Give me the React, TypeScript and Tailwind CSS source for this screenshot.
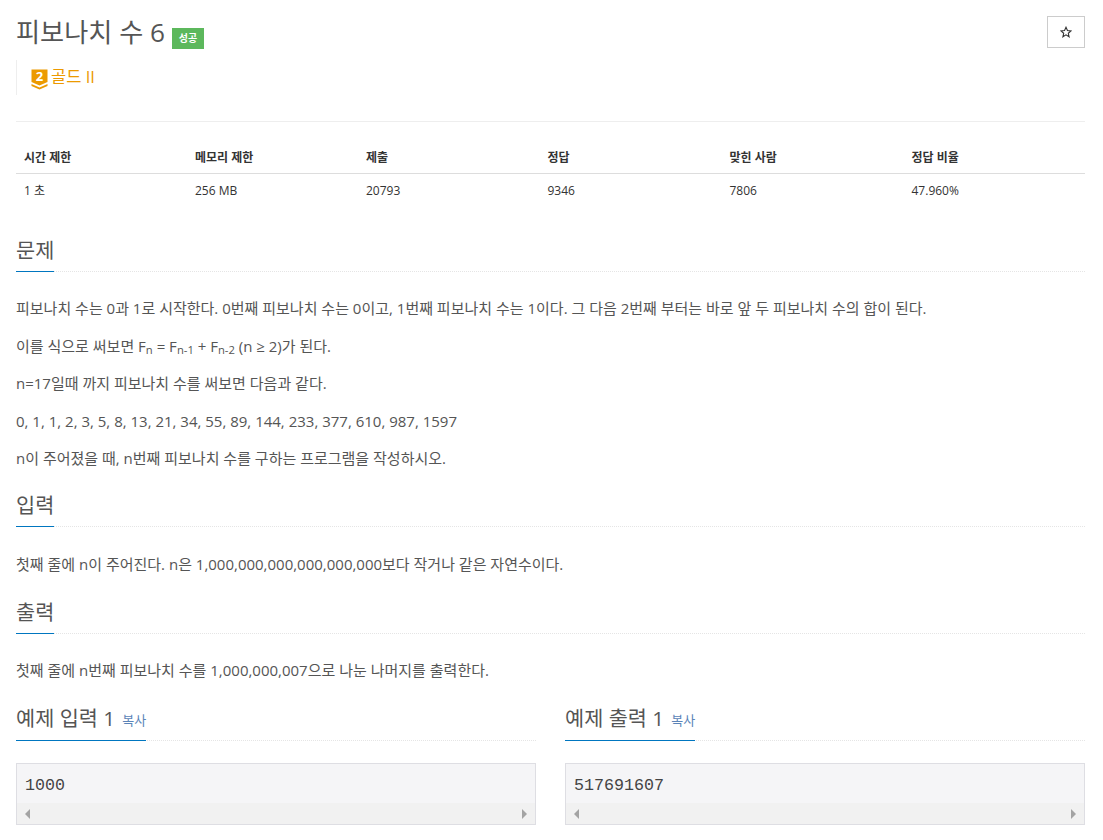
import React from "react";

const FONT = "font-['Open_Sans','Noto_Sans_CJK_KR',sans-serif]";

const stats = [
  { label: "시간 제한", value: "1 초", w: "w-[171px]" },
  { label: "메모리 제한", value: "256 MB", w: "w-[171px]" },
  { label: "제출", value: "20793", w: "w-[181.5px]" },
  { label: "정답", value: "9346", w: "w-[182px]" },
  { label: "맞힌 사람", value: "7806", w: "w-[182px]" },
  { label: "정답 비율", value: "47.960%", w: "flex-1" },
];

function Headline({ title }: { title: string }) {
  return (
    <div className="border-b border-dotted border-[#e5e5e5] h-[37px] flex">
      <div className="h-[37px] border-b border-[#0076c0] flex items-start">
        <h2 className="text-[20.8px] leading-[29px] pt-[1px] text-[#555]">{title}</h2>
      </div>
    </div>
  );
}

function SampleHead({ title }: { title: string }) {
  return (
    <div className="border-b border-dotted border-[#e5e5e5] h-[37px] flex">
      <div className="h-[37px] border-b border-[#0076c0] flex items-start">
        <h2 className="text-[20.8px] leading-[29px] text-[#555]">{title}</h2>
        <span className="ml-[7px] mt-[6px] text-[13px] leading-[20px] text-[#5b84b8]">복사</span>
      </div>
    </div>
  );
}

function SampleBox({ value }: { value: string }) {
  return (
    <div className="mt-[22px] border border-[#dedee3] bg-[#f5f5f7] h-[62px] flex flex-col">
      <div className="h-[39px] pl-[8px] pt-[10px] font-['Liberation_Mono',monospace] text-[16.67px] leading-[24px] text-[#444]">
        {value}
      </div>
      <div className="h-[21px] bg-[#f1f1f1] flex items-center justify-between px-[8px]">
        <span className="w-0 h-0 border-y-[5px] border-y-transparent border-r-[5px] border-r-[#a3a3a3]" />
        <span className="w-0 h-0 border-y-[5px] border-y-transparent border-l-[5px] border-l-[#a3a3a3]" />
      </div>
    </div>
  );
}

export default function App() {
  return (
    <div className={`${FONT} w-[1103px] h-[840px] overflow-hidden bg-white pl-[16px] pr-[18px] text-[15px] text-[#555]`}>
      {/* title */}
      <div className="flex justify-between pt-[16px] h-[122px] border-b border-[#eee]">
        <div>
          <div className="flex items-start">
            <h1 className="text-[26.2px] leading-[32px] text-[#555]">피보나치 수 6</h1>
            <span className="ml-[7px] mt-[12px] w-[32px] h-[21px] bg-[#5cb85c] text-white text-[10px] font-bold flex items-center justify-center">
              성공
            </span>
          </div>
          <div className="mt-[11px] h-[35px] border-l border-[#eee] pl-[14px] flex items-center">
            <svg width="17" height="23" viewBox="0 -2 17 23" className="mr-[3px] mt-[2px]">
              <path d="M0.5 0.5h16v12.5l-8 3.5-8-3.5z" fill="#ec9a00" />
              <path d="M0.5 15l8 3.5 8-3.5v2l-8 3.5-8-3.5z" fill="#ec9a00" />
              <text x="8.5" y="12" textAnchor="middle" fontSize="13" fontWeight="700" fill="#fff" fontFamily="Open Sans">2</text>
            </svg>
            <span className="text-[16.5px] leading-[22px] -mt-[1px] text-[#ec9a00]">골드 II</span>
          </div>
        </div>
        <button className="w-[38px] h-[32px] border border-[#ccc] bg-white flex items-center justify-center">
          <svg width="12" height="12" viewBox="0 0 24 24" fill="none" stroke="#333" strokeWidth="2.2">
            <path d="M12 2.5l2.9 6.6 7.1.7-5.4 4.7 1.6 7-6.2-3.7-6.2 3.7 1.6-7L2 9.8l7.1-.7z" />
          </svg>
        </button>
      </div>

      {/* stats */}
      <div className="mt-[20px] text-[12px] text-[#333]">
        <div className="flex h-[32px] border-b border-[#ddd] font-bold">
          {stats.map((s) => (
            <div key={s.label} className={`${s.w} pl-[8px] leading-[31px]`}>{s.label}</div>
          ))}
        </div>
        <div className="flex h-[34px]">
          {stats.map((s) => (
            <div key={s.label} className={`${s.w} pl-[8px] leading-[34px]`}>{s.value}</div>
          ))}
        </div>
      </div>

      {/* problem */}
      <div className="mt-[27px]">
        <Headline title="문제" />
        <div className="mt-[26px] leading-[20px] flex flex-col gap-[17.5px]">
          <p>피보나치 수는 0과 1로 시작한다. 0번째 피보나치 수는 0이고, 1번째 피보나치 수는 1이다. 그 다음 2번째 부터는 바로 앞 두 피보나치 수의 합이 된다.</p>
          <p>
            이를 식으로 써보면 F<sub className="text-[11.25px]">n</sub> = F<sub className="text-[11.25px]">n-1</sub> + F<sub className="text-[11.25px]">n-2</sub> (n ≥ 2)가 된다.
          </p>
          <p>n=17일때 까지 피보나치 수를 써보면 다음과 같다.</p>
          <p>0, 1, 1, 2, 3, 5, 8, 13, 21, 34, 55, 89, 144, 233, 377, 610, 987, 1597</p>
          <p>n이 주어졌을 때, n번째 피보나치 수를 구하는 프로그램을 작성하시오.</p>
        </div>
      </div>

      <div className="mt-[22px]">
        <Headline title="입력" />
        <p className="mt-[27px] leading-[20px]">첫째 줄에 n이 주어진다. n은 1,000,000,000,000,000,000보다 작거나 같은 자연수이다.</p>
      </div>

      <div className="mt-[23px]">
        <Headline title="출력" />
        <p className="mt-[26px] leading-[20px]">첫째 줄에 n번째 피보나치 수를 1,000,000,007으로 나눈 나머지를 출력한다.</p>
      </div>

      {/* samples */}
      <div className="mt-[24px] grid grid-cols-2 gap-x-[29px]">
        <div>
          <SampleHead title="예제 입력 1" />
          <SampleBox value="1000" />
        </div>
        <div>
          <SampleHead title="예제 출력 1" />
          <SampleBox value="517691607" />
        </div>
      </div>
    </div>
  );
}
